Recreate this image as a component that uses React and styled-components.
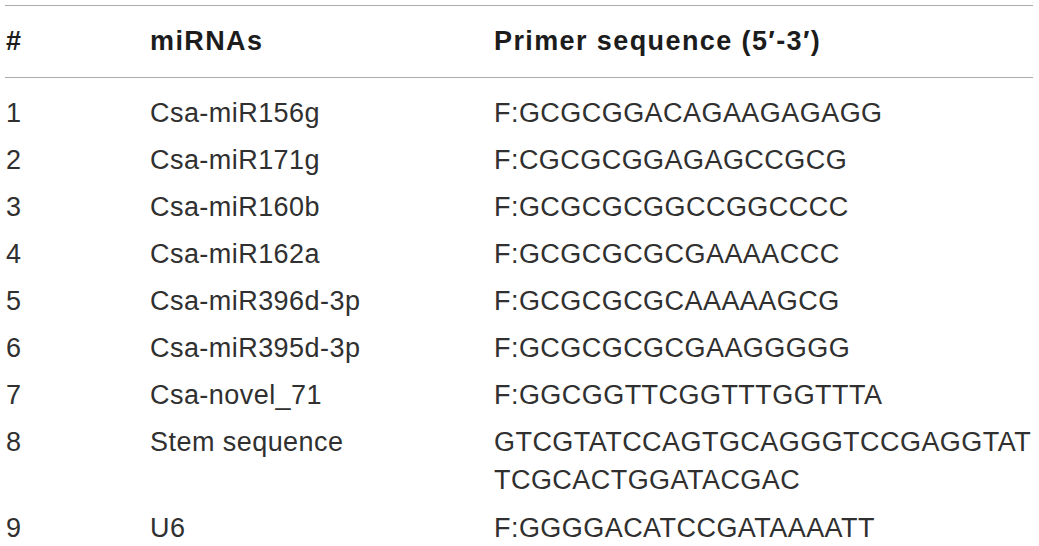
import React from "react";
import styled, { createGlobalStyle } from "styled-components";

const GlobalStyle = createGlobalStyle`
  html, body {
    margin: 0;
    padding: 0;
    background: #ffffff;
  }
  body {
    font-family: "Liberation Sans", Arial, Helvetica, sans-serif;
    color: #303030;
  }
`;

const Table = styled.div`
  margin: 5px 6px 0 5px;
  border-top: 1px solid #ababab;
  font-size: 27px;
`;

const Grid = styled.div`
  display: grid;
  grid-template-columns: 145px 344px 1fr;
`;

const HeaderRow = styled(Grid)`
  height: 71px;
  align-items: center;
  border-bottom: 1px solid #ababab;
  font-weight: 700;
  letter-spacing: 1.4px;
  color: #1c1c1c;
`;

const Body = styled.div`
  padding-top: 12px;
  letter-spacing: 0.45px;
`;

const Row = styled(Grid)`
  padding: 4px 0 ${(p) => (p.$tall ? "6px" : "5px")};
  line-height: 38px;
`;

const Cell = styled.div`
  padding-left: ${(p) => (p.$first ? "1px" : "0")};
  white-space: nowrap;
`;

const rows = [
  ["1", "Csa-miR156g", ["F:GCGCGGACAGAAGAGAGG"]],
  ["2", "Csa-miR171g", ["F:CGCGCGGAGAGCCGCG"]],
  ["3", "Csa-miR160b", ["F:GCGCGCGGCCGGCCCC"]],
  ["4", "Csa-miR162a", ["F:GCGCGCGCGAAAACCC"]],
  ["5", "Csa-miR396d-3p", ["F:GCGCGCGCAAAAAGCG"]],
  ["6", "Csa-miR395d-3p", ["F:GCGCGCGCGAAGGGGG"]],
  ["7", "Csa-novel_71", ["F:GGCGGTTCGGTTTGGTTTA"]],
  ["8", "Stem sequence", ["GTCGTATCCAGTGCAGGGTCCGAGGTAT", "TCGCACTGGATACGAC"]],
  ["9", "U6", ["F:GGGGACATCCGATAAAATT"]],
];

export default function App() {
  return (
    <>
      <GlobalStyle />
      <Table>
        <HeaderRow>
          <Cell $first>#</Cell>
          <Cell>miRNAs</Cell>
          <Cell>Primer sequence (5′-3′)</Cell>
        </HeaderRow>
        <Body>
          {rows.map(([n, name, seq]) => (
            <Row key={n} $tall={seq.length > 1}>
              <Cell $first>{n}</Cell>
              <Cell>{name}</Cell>
              <Cell>
                {seq.map((s, i) => (
                  <div key={i}>{s}</div>
                ))}
              </Cell>
            </Row>
          ))}
        </Body>
      </Table>
    </>
  );
}
